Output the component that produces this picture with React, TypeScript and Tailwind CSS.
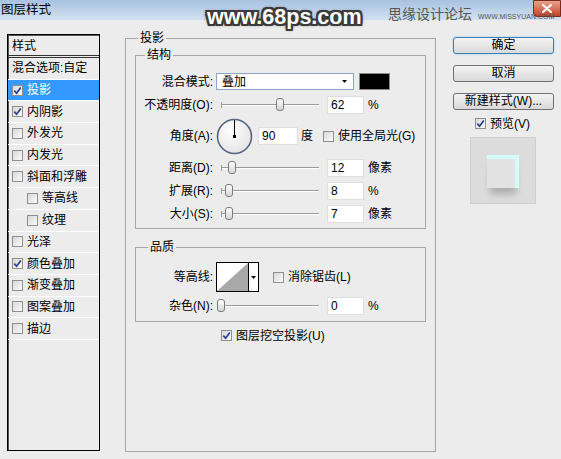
import React from 'react';

const FONT = "font-['Liberation_Sans','Noto_Sans_CJK_SC',sans-serif]";

const effects = [
  { name: '投影', on: true, sel: true },
  { name: '内阴影', on: true },
  { name: '外发光' },
  { name: '内发光' },
  { name: '斜面和浮雕' },
  { name: '等高线', sub: true },
  { name: '纹理', sub: true },
  { name: '光泽' },
  { name: '颜色叠加', on: true },
  { name: '渐变叠加' },
  { name: '图案叠加' },
  { name: '描边' },
];

function Check({ on = false }: { on?: boolean }) {
  return (
    <span className="inline-flex h-[11px] w-[11px] shrink-0 items-center justify-center border border-[#8e8f8f] bg-gradient-to-br from-[#d8d8d8] to-[#fbfbfb]">
      {on && (
        <svg viewBox="0 0 9 9" className="h-[9px] w-[9px]">
          <path d="M1.3 4.6 L3.6 7.2 L7.8 1.4" stroke="#2a3c8e" strokeWidth="1.7" fill="none" />
        </svg>
      )}
    </span>
  );
}

// ползунок: pos = смещение бегунка от начала дорожки
function Slider({ pos }: { pos: number }) {
  return (
    <div className="relative ml-[8px] h-[14px] w-[98px] shrink-0">
      <div className="absolute left-0 right-0 top-[6px] border-y border-t-[#9a9a9a] border-b-white" />
      <div className="absolute left-0 top-[4px] h-[6px] w-px bg-[#9a9a9a]" />
      <div
        className="absolute top-0 h-[13px] w-[8px] rounded-[3px] border border-[#7b7b7b] bg-gradient-to-b from-white to-[#d6d6d6]"
        style={{ left: pos }}
      />
    </div>
  );
}

function Field({ v }: { v: string }) {
  return (
    <div className="ml-[8px] h-[18px] w-[37px] shrink-0 border border-[#dedede] bg-white pl-[3px] leading-[16px]">
      {v}
    </div>
  );
}

function Label({ children }: { children: React.ReactNode }) {
  return <span className="w-[77px] shrink-0 text-right">{children}</span>;
}

function Arrow() {
  return (
    <svg width="5" height="3" viewBox="0 0 5 3">
      <polygon points="0,0 5,0 2.5,3" fill="#000" />
    </svg>
  );
}

export default function App() {
  return (
    <div className={`relative h-[459px] w-[561px] overflow-hidden bg-[#ececec] text-[12px] text-black ${FONT}`}>
      {/* заголовок окна */}
      <div className="flex h-[20px] items-start justify-between bg-gradient-to-b from-[#a7c2e1] to-[#d2e1f1]">
        <span className="pl-[1px] pt-[2px] text-[12.5px] leading-[16px]">图层样式</span>
        <div className="flex h-[17px] w-[28px] items-center justify-center rounded-bl-[4px] border border-[#7a2a1a] bg-gradient-to-b from-[#e9a08a] to-[#c2422a]">
          <svg width="10" height="9" viewBox="0 0 10 9">
            <path d="M1 1 L9 8 M9 1 L1 8" stroke="#fff" strokeWidth="2.2" strokeLinecap="round" />
          </svg>
        </div>
      </div>

      {/* водяные знаки */}
      <div className="absolute left-[207px] top-[4px] text-[21.5px] font-bold leading-[26px] text-white [text-shadow:-2px_-2px_0_#3b3b3b,2px_-2px_0_#3b3b3b,-2px_2px_0_#3b3b3b,2px_2px_0_#3b3b3b,0_2px_0_#3b3b3b,0_-2px_0_#3b3b3b,2px_0_0_#3b3b3b,-2px_0_0_#3b3b3b,0_0_4px_#000]">
        www.68ps.com
      </div>
      <div className="absolute left-[388px] top-[6px] text-[14px] leading-[16px] text-[#555]">思缘设计论坛</div>
      <div className="absolute left-[478px] top-[12px] text-[7px] leading-[9px] text-[#555]">WWW.MISSYUAN.COM</div>

      <div className="flex items-start">
        {/* список стилей */}
        <div className="ml-[7px] mt-[14px] flex h-[417px] w-[93px] flex-col border border-black shadow-[inset_1px_1px_0_#555]">
          <div className="h-[23px] border-b-[3px] border-double border-[#333] pl-[4px] leading-[22px]">样式</div>
          <div className="h-[21.7px] border-b border-white pl-[4px] leading-[21px]">混合选项:自定</div>
          {effects.map((e) => (
            <div
              key={e.name}
              className={`flex h-[21.7px] items-center gap-[4px] border-b border-white ${e.sub ? 'pl-[19px]' : 'pl-[4px]'} ${
                e.sel ? 'bg-[#3399ff] text-white' : ''
              }`}
            >
              <Check on={e.on} />
              <span>{e.name}</span>
            </div>
          ))}
        </div>

        {/* 投影 */}
        <fieldset className="ml-[25px] mt-[11px] h-[421px] w-[311px] border border-[#a6a6a6]">
          <legend className="ml-[12px] px-[2px] leading-[14px]">投影</legend>
          <div className="px-[9px]">
            <fieldset className="mt-[3px] border border-[#a6a6a6] pb-[5px]">
              <legend className="ml-[9px] px-[2px] leading-[14px]">结构</legend>
              <div className="mt-[11px] flex h-[17px] items-center">
                <Label>混合模式:</Label>
                <div className="ml-[3px] flex h-[17px] w-[138px] items-center justify-between border border-[#8ea6c4] bg-white pl-[5px] pr-[6px]">
                  <span>叠加</span>
                  <Arrow />
                </div>
                <div className="ml-[5px] h-[17px] w-[31px] border border-[#8a8a8a] bg-black" />
              </div>
              <div className="mt-[6px] flex h-[18px] items-center">
                <Label>不透明度(O):</Label>
                <Slider pos={55} />
                <Field v="62" />
                <span className="ml-[4px]">%</span>
              </div>
              <div className="mt-[4px] flex h-[36px] items-center">
                <Label>角度(A):</Label>
                <svg width="37" height="37" className="ml-[3px] shrink-0">
                  <defs>
                    <radialGradient id="dial" cx="0.4" cy="0.35" r="0.7">
                      <stop offset="0" stopColor="#ffffff" />
                      <stop offset="1" stopColor="#e2e2e2" />
                    </radialGradient>
                  </defs>
                  <circle cx="18.5" cy="18.5" r="17" fill="url(#dial)" stroke="#56647e" strokeWidth="1.6" />
                  <line x1="18.5" y1="18.5" x2="18.5" y2="2" stroke="#000" strokeWidth="1" />
                  <rect x="17" y="17" width="3" height="3" fill="#000" />
                </svg>
                <div className="ml-[5px] h-[18px] w-[40px] shrink-0 border border-[#dedede] bg-white pl-[3px] leading-[16px]">90</div>
                <span className="ml-[3px]">度</span>
                <span className="ml-[10px] flex items-center gap-[4px]">
                  <Check />
                  使用全局光(G)
                </span>
              </div>
              <div className="mt-[5px] flex h-[18px] items-center">
                <Label>距离(D):</Label>
                <Slider pos={7} />
                <Field v="12" />
                <span className="ml-[4px]">像素</span>
              </div>
              <div className="mt-[5px] flex h-[18px] items-center">
                <Label>扩展(R):</Label>
                <Slider pos={4} />
                <Field v="8" />
                <span className="ml-[4px]">%</span>
              </div>
              <div className="mt-[5px] flex h-[18px] items-center">
                <Label>大小(S):</Label>
                <Slider pos={4} />
                <Field v="7" />
                <span className="ml-[4px]">像素</span>
              </div>
            </fieldset>

            <fieldset className="mt-[11px] border border-[#a6a6a6] pb-[6px]">
              <legend className="ml-[12px] px-[2px] leading-[14px]">品质</legend>
              <div className="mt-[8px] flex h-[30px] items-center">
                <Label>等高线:</Label>
                <div className="ml-[3px] flex h-[30px] w-[43px] border border-black bg-white">
                  <svg width="31" height="28" className="block">
                    <polygon points="0,28 31,0 31,28" fill="#a8a8a8" />
                  </svg>
                  <div className="flex w-[10px] items-center justify-center border-l border-black">
                    <Arrow />
                  </div>
                </div>
                <span className="ml-[14px] flex items-center gap-[4px]">
                  <Check />
                  消除锯齿(L)
                </span>
              </div>
              <div className="mt-[5px] flex h-[18px] items-center">
                <Label>杂色(N):</Label>
                <Slider pos={-4} />
                <Field v="0" />
                <span className="ml-[4px]">%</span>
              </div>
            </fieldset>

            <div className="mt-[7px] flex h-[13px] items-center gap-[4px] pl-[86px]">
              <Check on />
              <span>图层挖空投影(U)</span>
            </div>
          </div>
        </fieldset>

        {/* кнопки справа */}
        <div className="ml-[17px] mt-[17px] flex w-[101px] flex-col">
          <button className="h-[17px] rounded-[3px] border border-[#3c7fb1] bg-gradient-to-b from-[#f4f4f4] to-[#d9d9d9] leading-[15px] shadow-[0_0_2px_#7ec3f0]">
            确定
          </button>
          <button className="mt-[11px] h-[17px] rounded-[3px] border border-[#707070] bg-gradient-to-b from-[#f4f4f4] to-[#d9d9d9] leading-[15px]">
            取消
          </button>
          <button className="mt-[11px] h-[17px] rounded-[3px] border border-[#707070] bg-gradient-to-b from-[#f4f4f4] to-[#d9d9d9] leading-[15px]">
            新建样式(W)...
          </button>
          <div className="ml-[22px] mt-[7px] flex h-[13px] items-center gap-[4px]">
            <Check on />
            <span>预览(V)</span>
          </div>
          <div className="ml-[17px] mt-[7px] flex h-[67px] w-[66px] items-start justify-center border border-[#cfcfcf] bg-[#dcdcdc] pt-[17px]">
            <div className="h-[33px] w-[32px] border-r-[4px] border-t-[4px] border-[#d6fbfb] bg-[#e2e2e2] shadow-[0_9px_7px_-3px_rgba(0,0,0,0.22)]" />
          </div>
        </div>
      </div>
    </div>
  );
}
